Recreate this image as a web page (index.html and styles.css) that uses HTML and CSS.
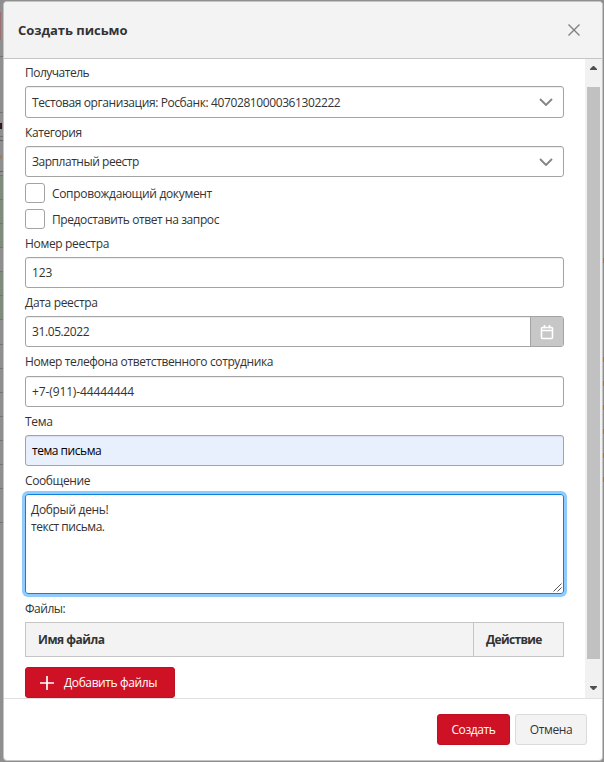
FILE: index.html
```html
<!DOCTYPE html>
<html lang="ru">
<head>
<meta charset="utf-8">
<title>Создать письмо</title>
<link rel="stylesheet" href="styles.css">
</head>
<body>
<div class="dialog">
  <header class="header">
    <h1 class="title">Создать письмо</h1>
    <svg class="close" viewBox="0 0 12 12"><path d="M.5.5l11 11M11.5.5l-11 11"/></svg>
  </header>
  <div class="content">
    <form class="form">
      <label class="label">Получатель</label>
      <div class="field tall"><span>Тестовая организация: Росбанк: 40702810000361302222</span><svg class="chevron" viewBox="0 0 14 8"><path d="M1 1l6 6 6-6"/></svg></div>
      <label class="label">Категория</label>
      <div class="field"><span class="tight">Зарплатный реестр</span><svg class="chevron" viewBox="0 0 14 8"><path d="M1 1l6 6 6-6"/></svg></div>
      <div class="check"><span class="box"></span><span class="loose">Сопровождающий документ</span></div>
      <div class="check"><span class="box"></span><span>Предоставить ответ на запрос</span></div>
      <label class="label loose">Номер реестра</label>
      <div class="field digits">123</div>
      <label class="label loose">Дата реестра</label>
      <div class="field date"><span>31.05.2022</span><span class="calendar"><svg viewBox="0 0 14 16"><path d="M2.500 3.500h9q1 0 1 1v9q0 1-1 1h-9q-1 0-1-1v-9q0-1 1-1zM1.500 6.500h11M4.500 1v3.500M9.500 1v3.500"/></svg></span></div>
      <label class="label phone-label">Номер телефона ответственного сотрудника</label>
      <div class="field digits">+7-(911)-44444444</div>
      <label class="label loose">Тема</label>
      <div class="field filled tight">тема письма</div>
      <label class="label">Сообщение</label>
      <div class="message"><span class="loose">Добрый день!</span><br><span class="tight">текст письма.</span><svg class="grip" viewBox="0 0 9 9"><path d="M.5 8.500l8-8M4.500 8.500l4-4"/></svg></div>
      <label class="label tight">Файлы:</label>
      <div class="table"><div class="cell name">Имя файла</div><div class="cell action">Действие</div></div>
      <div class="button primary add"><svg class="plus" viewBox="0 0 14 14"><path d="M7 0v14M0 7h14"/></svg><span>Добавить файлы</span></div>
    </form>
    <div class="scrollbar">
      <svg class="arrow" viewBox="0 0 7 4"><path d="M3 0h1l3 3v1H0V3z"/></svg>
      <div class="thumb"></div>
      <svg class="arrow" viewBox="0 0 7 4"><path d="M0 0h7v1L4 4H3L0 1z"/></svg>
    </div>
  </div>
  <footer class="footer">
    <div class="button primary create">Создать</div>
    <div class="button cancel">Отмена</div>
  </footer>
</div>
</body>
</html>
```
FILE: styles.css
```css
* { box-sizing: border-box; }
body {
  margin: 0; height: 762px; padding: 1px 1px 1px 3px; overflow: hidden; color: #333;
  font: 12px/17px "Open Sans", "Noto Sans", sans-serif; letter-spacing: -.4px;
  /* page behind the dialog: toolbar edge, text fragments, table rows */
  background:
    linear-gradient(#a06f72, #a06f72) 0 12px / 1px 28px no-repeat,
    linear-gradient(#30191d, #30191d) 0 123px / 2px 6px no-repeat,
    linear-gradient(#95825e, #95825e) 0 155px / 2px 4px no-repeat,
    linear-gradient(#737373, #737373) 0 56px / 3px 1px no-repeat,
    linear-gradient(#737373, #737373) 0 112px / 3px 1px no-repeat,
    linear-gradient(#737373, #737373) 0 136px / 3px 1px no-repeat,
    linear-gradient(#606060, #606060) 0 140px / 3px 1px no-repeat,
    linear-gradient(#606060, #606060) 0 171px / 3px 1px no-repeat,
    repeating-linear-gradient(#747474 0 1px, transparent 1px 24px) 0 175px / 3px 145px no-repeat,
    linear-gradient(#7f8c7b, #7f8c7b) 0 175px / 3px 72px no-repeat,
    linear-gradient(#7f8c7b, #7f8c7b) 0 271px / 3px 48px no-repeat,
    repeating-linear-gradient(#747474 0 1px, transparent 1px 24px) 0 344px / 3px 145px no-repeat,
    linear-gradient(#747474, #747474) 0 522px / 3px 1px no-repeat,
    repeating-linear-gradient(#967347 0 5px, transparent 5px 24px) 603px 357px / 1px 126px no-repeat,
    linear-gradient(#967347, #967347) 603px 258px / 1px 5px no-repeat,
    #8f8f8f;
}
.dialog { width: 600px; height: 760px; display: flex; flex-direction: column; background: #fff; border: 1px solid #c4c4c4; border-radius: 4px; overflow: hidden; }
.header { height: 57px; flex: none; display: flex; align-items: center; justify-content: space-between; padding: 0 22px 0 14px; background: #f3f3f3; border-bottom: 1px solid #c5c5c5; }
.title { margin: 0; font-size: 13px; font-weight: 700; letter-spacing: -.04px; }
.tight { letter-spacing: -.47px; }
.loose { letter-spacing: -.33px; }
.digits { letter-spacing: -.12px; }
svg { display: block; fill: none; flex: none; }
.close { width: 12px; height: 12px; stroke: #808080; stroke-width: 1.4; }
.content { height: 639px; flex: none; display: flex; }
.form { width: 581px; padding: 5px 21px 0; display: flex; flex-direction: column; }
.label { height: 17px; margin: 6px 0 5px; flex: none; }
.label:first-child { margin-top: 0; letter-spacing: -.5px; }
.phone-label { margin-bottom: 6px; letter-spacing: -.38px; }
.field { height: 31px; flex: none; display: flex; align-items: center; justify-content: space-between; padding: 0 6px; border: 1px solid #a3a3a3; border-radius: 3px; box-shadow: inset 0 1px 1px #00000012; }
.tall { height: 32px; }
.chevron { width: 14px; height: 8px; stroke: #858585; stroke-width: 1.9; margin-right: 4px; }
.check { display: flex; gap: 7px; height: 20px; align-items: center; margin-top: 6px; flex: none; }
.box { width: 20px; height: 20px; border: 1px solid #a3a3a3; border-radius: 3px; }
.date { padding-right: 0; }
.calendar { width: 33px; height: 29px; border-left: 1px solid #a3a3a3; background: #c7c7c7; display: flex; align-items: center; justify-content: center; }
.calendar svg { width: 14px; height: 16px; stroke: #fff; stroke-width: 1.6; }
.filled { background: #e8effd; color: #000; }
.message { position: relative; height: 100px; flex: none; padding: 6px 5px; border: 1px solid #0b80dc; border-radius: 3px; box-shadow: 0 0 0 3px #90cbfc; }
.grip { position: absolute; right: 1px; bottom: 1px; width: 9px; height: 9px; stroke: #555; stroke-width: 1; }
.table { display: flex; height: 35px; flex: none; border: 1px solid #c5c5c5; background: #f3f3f3; font-weight: 700; letter-spacing: -.5px; }
.cell { display: flex; align-items: center; padding-left: 12px; }
.name { width: 448px; border-right: 1px solid #c5c5c5; }
.action { letter-spacing: -.65px; }
.button { height: 31px; display: flex; align-items: center; justify-content: center; border: 1px solid; border-radius: 3px; flex: none; }
.primary { background: #cf1126; border-color: #bc1023; color: #fff; }
.add { width: 150px; margin-top: 10px; padding-left: 14px; gap: 10px; justify-content: flex-start; }
.plus { width: 14px; height: 14px; stroke: #fff; stroke-width: 1.7; }
.scrollbar { width: 17px; background: #f1f1f1; display: flex; flex-direction: column; align-items: center; padding: 7px 0 8px; }
.thumb { width: 13px; height: 572px; background: #c1c1c1; margin: 17px 0 27px; }
.arrow { width: 7px; height: 4px; fill: #505050; }
.footer { flex: 1; display: flex; justify-content: flex-end; gap: 5px; padding: 15px 15px 0; border-top: 1px solid #e0e0e0; }
.create { width: 73px; }
.cancel { width: 72px; background: #f3f3f3; border-color: #dadada; }
```
